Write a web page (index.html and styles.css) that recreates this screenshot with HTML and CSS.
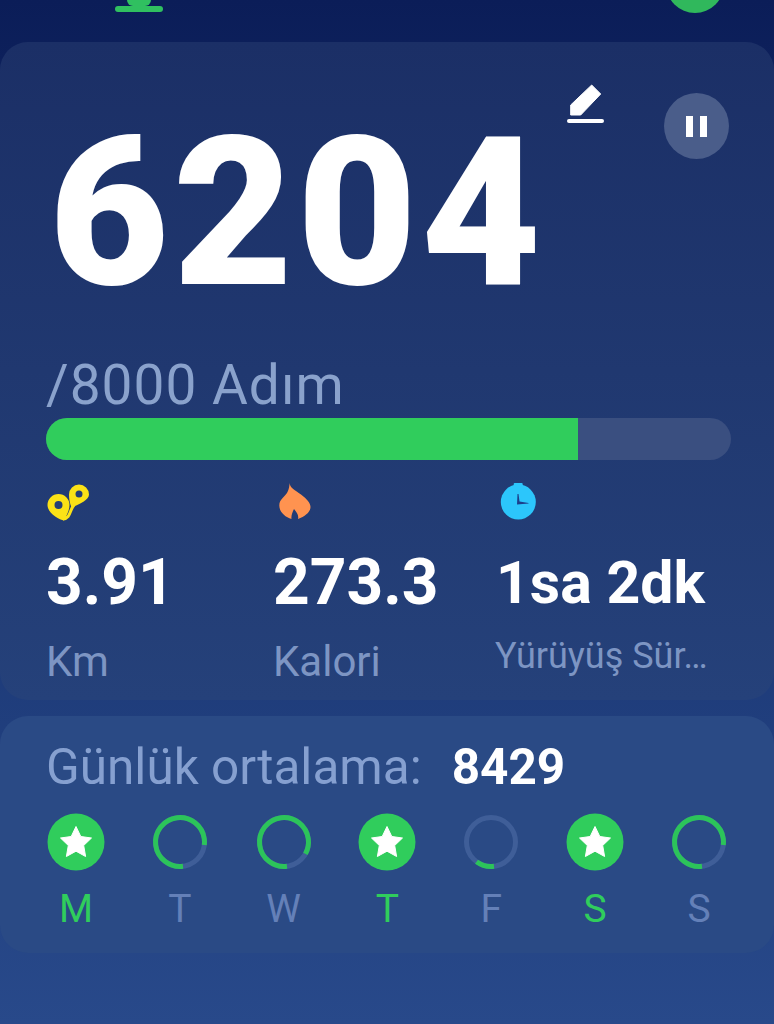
FILE: index.html
```html
<!DOCTYPE html>
<html>
<head>
	<title>Adım</title>
	<link rel="stylesheet" href="styles.css">
</head>
<body>
	<div class="top">
		<div class="tab">
			<div class="tab-dot"></div>
			<div class="tab-line"></div>
		</div>
		<div class="top-btn"></div>
	</div>

	<div class="card main">
		<svg class="edit" width="38" height="40" viewBox="0 0 38 40">
			<path d="M25.7 1 L34.7 10 L14.7 31 L4.7 31 L4.7 21 Z" fill="#fff" stroke="#fff" stroke-width="1" stroke-linejoin="round"/>
			<rect x="1" y="35" width="37" height="4" rx="2" fill="#fff"/>
		</svg>
		<div class="pause">
			<span></span>
			<span></span>
		</div>

		<div class="steps">6204</div>
		<div class="goal">/8000 Adım</div>
		<div class="bar">
			<div class="bar-fill" style="width: 77.7%"></div>
		</div>

		<div class="stats">
			<div class="stat">
				<svg class="stat-icon" width="42" height="38" viewBox="0 0 42 38">
					<path d="M17 35.500 C12 35 0.500 28 0.500 20 A11 11 0 1 1 22.500 20 C22.500 25 20 30 17 35.500 Z" fill="#fbe216"/>
					<path d="M24.500 22.500 C22.500 18 22 13 22 9.500 A10 10 0 1 1 42 9.500 C42 15 33 19 24.500 22.500 Z" fill="#fbe216"/>
					<path d="M16 34 C24 33 22 26 27 20" fill="none" stroke="#fbe216" stroke-width="3"/>
					<circle cx="11.500" cy="20" r="4" fill="#243f76"/>
					<circle cx="32" cy="9" r="3.500" fill="#243f76"/>
				</svg>
				<div class="stat-val">3.91</div>
				<div class="stat-label">Km</div>
			</div>
			<div class="stat">
				<svg class="stat-icon" width="42" height="38" viewBox="0 0 42 38">
					<path d="M15.500 -2 C16 3 21 5 27 9.500 C33 14 36.500 18 36.500 22 C36.500 27 31 31.500 24 34 C25 30 22.500 27 20 24 C18.500 27 17 31 17.500 34 C11 32 5.300 27 5.300 20.500 C5.300 14 11 12 13.500 7 C15 4 15.500 1 15.500 -2 Z" fill="#ff9350"/>
				</svg>
				<div class="stat-val">273.3</div>
				<div class="stat-label">Kalori</div>
			</div>
			<div class="stat">
				<svg class="stat-icon" width="42" height="38" viewBox="0 0 42 38">
					<rect x="15.700" y="-2" width="9" height="4" rx="1" fill="#2cc6fb"/>
					<circle cx="20.300" cy="17" r="17.500" fill="#2cc6fb"/>
					<path d="M19.500 9 L20.500 9 L21.500 16.500 L30.500 18 L30.500 18.500 L19 19.500 Z" fill="#1c3f8a"/>
				</svg>
				<div class="stat-val small">1sa 2dk</div>
				<div class="stat-label small">Yürüyüş Sür…</div>
			</div>
		</div>
	</div>

	<div class="card week">
		<div class="avg">
			<span class="avg-label">Günlük ortalama:</span>
			<span class="avg-val">8429</span>
		</div>
		<div class="days">
			<div class="day done">
				<svg class="ico" width="58" height="58" viewBox="0 0 58 58">
					<circle cx="29" cy="29" r="28.500" fill="#30cd5c"/>
					<path d="M29 13.500 L33.800 23.500 L44.500 25 L36.700 32.500 L38.600 43.500 L29 38.200 L19.400 43.500 L21.300 32.500 L13.500 25 L24.200 23.500 Z" fill="#fff" stroke="#fff" stroke-width="1" stroke-linejoin="round"/>
				</svg>
				<div class="day-name">M</div>
			</div>
			<div class="day">
				<svg class="ico" width="58" height="58" viewBox="0 0 58 58">
					<circle class="ring" cx="29" cy="29" r="24.500"/>
					<circle class="ring-on" cx="29" cy="29" r="24.500" pathLength="100" stroke-dasharray="79 100" transform="rotate(83 29 29)"/>
				</svg>
				<div class="day-name">T</div>
			</div>
			<div class="day">
				<svg class="ico" width="58" height="58" viewBox="0 0 58 58">
					<circle class="ring" cx="29" cy="29" r="24.500"/>
					<circle class="ring-on" cx="29" cy="29" r="24.500" pathLength="100" stroke-dasharray="85 100" transform="rotate(83 29 29)"/>
				</svg>
				<div class="day-name">W</div>
			</div>
			<div class="day done">
				<svg class="ico" width="58" height="58" viewBox="0 0 58 58">
					<circle cx="29" cy="29" r="28.500" fill="#30cd5c"/>
					<path d="M29 13.500 L33.800 23.500 L44.500 25 L36.700 32.500 L38.600 43.500 L29 38.200 L19.400 43.500 L21.300 32.500 L13.500 25 L24.200 23.500 Z" fill="#fff" stroke="#fff" stroke-width="1" stroke-linejoin="round"/>
				</svg>
				<div class="day-name">T</div>
			</div>
			<div class="day">
				<svg class="ico" width="58" height="58" viewBox="0 0 58 58">
					<circle class="ring" cx="29" cy="29" r="24.500"/>
					<circle class="ring-on" cx="29" cy="29" r="24.500" pathLength="100" stroke-dasharray="12 100" transform="rotate(83 29 29)"/>
				</svg>
				<div class="day-name">F</div>
			</div>
			<div class="day done">
				<svg class="ico" width="58" height="58" viewBox="0 0 58 58">
					<circle cx="29" cy="29" r="28.500" fill="#30cd5c"/>
					<path d="M29 13.500 L33.800 23.500 L44.500 25 L36.700 32.500 L38.600 43.500 L29 38.200 L19.400 43.500 L21.300 32.500 L13.500 25 L24.200 23.500 Z" fill="#fff" stroke="#fff" stroke-width="1" stroke-linejoin="round"/>
				</svg>
				<div class="day-name">S</div>
			</div>
			<div class="day">
				<svg class="ico" width="58" height="58" viewBox="0 0 58 58">
					<circle class="ring" cx="29" cy="29" r="24.500"/>
					<circle class="ring-on" cx="29" cy="29" r="24.500" pathLength="100" stroke-dasharray="79 100" transform="rotate(83 29 29)"/>
				</svg>
				<div class="day-name">S</div>
			</div>
		</div>
	</div>
</body>
</html>
```

FILE: styles.css
```css
*{
	margin: 0px;
	padding: 0px;
	box-sizing: border-box;
}
html,body{
	height: 100%;
}
body{
	background: linear-gradient(180deg, #0b1d58 0%, #1d3a78 60%, #28498a 100%);
	font-family: Roboto, "Liberation Sans", sans-serif;
	overflow: hidden;
}
.top{
	height: 42px;
	overflow: hidden;
	display: flex;
	justify-content: space-between;
	padding: 0 50px 0 115px;
}
.tab{
	width: 48px;
}
.tab-dot{
	width: 24px;
	height: 6px;
	margin: 0 auto;
	background: #30c060;
	border-radius: 0 0 12px 12px;
}
.tab-line{
	height: 6px;
	background: #30c060;
	border-radius: 3px;
}
.top-btn{
	width: 58px;
	height: 58px;
	margin-top: -45px;
	background: #30b85c;
	border-radius: 50%;
}
.card{
	border-radius: 28px;
}
.main{
	height: 658px;
	position: relative;
	background: linear-gradient(180deg, #1b2f66 0%, #25417a 100%);
	padding: 62px 0 0 46px;
}
.edit{
	position: absolute;
	left: 566px;
	top: 42px;
}
.pause{
	position: absolute;
	left: 664px;
	top: 51px;
	width: 65px;
	height: 66px;
	border-radius: 50%;
	background: #4a5d8a;
	display: flex;
	justify-content: center;
	align-items: center;
	gap: 7px;
}
.pause span{
	width: 7px;
	height: 21px;
	background: #fff;
}
.steps{
	font-size: 207px;
	line-height: 220px;
	font-weight: 900;
	letter-spacing: 4px;
	margin-left: 3px;
	color: #fff;
}
.goal{
	font-size: 55px;
	line-height: 60px;
	letter-spacing: 1px;
	color: #8aa2cc;
	margin-top: 31px;
}
.bar{
	width: 685px;
	height: 42px;
	margin-top: 3px;
	border-radius: 21px;
	background: #3a4f80;
	overflow: hidden;
}
.bar-fill{
	height: 100%;
	background: #30cd5c;
}
.stats{
	display: grid;
	grid-template-columns: 227px 224px 1fr;
	margin-top: 25px;
}
.stat-icon{
	display: block;
	overflow: visible;
	margin-left: 1px;
}
.stat-val{
	font-size: 64px;
	line-height: 70px;
	font-weight: 700;
	color: #fff;
	margin-top: 25px;
}
.stat-val.small{
	font-size: 59px;
	margin-left: -1px;
}
.stat-label{
	font-size: 42px;
	line-height: 48px;
	color: #7d95c3;
	margin-top: 20px;
}
.stat-label.small{
	font-size: 36px;
	margin-left: -2px;
	margin-top: 14px;
}
.week{
	height: 237px;
	margin-top: 16px;
	background: #2a4a85;
	padding: 24px 46px 0 46px;
}
.avg{
	display: flex;
	align-items: baseline;
	gap: 30px;
	line-height: 54px;
}
.avg-label{
	font-size: 49.500px;
	color: #86a0d0;
}
.avg-val{
	font-size: 49.500px;
	font-weight: 700;
	color: #fff;
}
.days{
	display: flex;
	justify-content: space-between;
	margin-top: 19px;
	margin-left: 1px;
}
.day{
	width: 58px;
	text-align: center;
}
.ico{
	display: block;
}
.ring{
	fill: none;
	stroke: #3f5e98;
	stroke-width: 5;
}
.ring-on{
	fill: none;
	stroke: #2cc45a;
	stroke-width: 5;
}
.day-name{
	font-size: 39px;
	line-height: 44px;
	color: #6480b8;
	margin-top: 16px;
}
.done .day-name{
	color: #30cd5c;
}
```
